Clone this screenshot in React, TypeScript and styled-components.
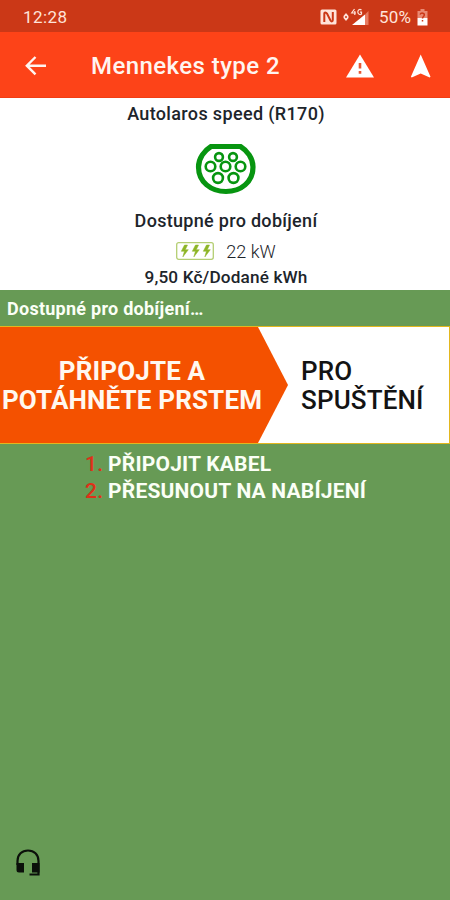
import React from "react";
import styled, { createGlobalStyle } from "styled-components";

const GlobalStyle = createGlobalStyle`
  * { box-sizing: border-box; }
  body { margin: 0; background: #679a55; }
`;

const Screen = styled.div`
  display: flex;
  flex-direction: column;
  width: 450px;
  height: 900px;
  overflow: hidden;
  background: #679a55;
  font-family: Roboto, sans-serif;
`;

const StatusBar = styled.header`
  display: flex;
  align-items: center;
  height: 32px;
  padding: 2px 22px 0 23px;
  background: #cb3817;
  color: #ffe3da;
  font-size: 17px;
  line-height: 20px;
`;

const Clock = styled.span`
  flex: 1;
  letter-spacing: 0.4px;
`;

const StatusIcon = styled.svg<{ $gap: number }>`
  flex: none;
  display: block;
  margin-right: ${(p) => p.$gap}px;
`;

const BatteryLevel = styled.span`
  width: 38px;
  white-space: nowrap;
  font-size: 17px;
  letter-spacing: 0.2px;
`;

const AppBar = styled.nav`
  display: flex;
  align-items: center;
  height: 66px;
  padding: 2px 17px 0 21px;
  background: #fd4318;
  border-bottom: 1px solid #f13d14;
  color: #fff5f0;
`;

const IconButton = styled.button`
  display: flex;
  padding: 0;
  border: 0;
  background: none;
  color: inherit;
`;

const Title = styled.h1`
  flex: 1;
  margin: 0 0 0 40px;
  font-size: 24px;
  font-weight: 500;
  line-height: 28px;
  letter-spacing: 0.43px;
  white-space: nowrap;
`;

const Actions = styled.div`
  display: flex;
  gap: 35px;
`;

const Station = styled.section`
  display: flex;
  flex-direction: column;
  align-items: center;
  height: 192px;
  padding: 5px 0 0 2px;
  background: #fff;
  color: #1d252b;
`;

const StationLine = styled.div<{ $spacing: number; $size?: number }>`
  font-size: ${(p) => p.$size ?? 18}px;
  font-weight: 500;
  line-height: 22px;
  letter-spacing: ${(p) => p.$spacing}px;
  white-space: nowrap;
`;

const PlugIcon = styled.svg`
  display: block;
  margin: 18px 0 15px;
`;

const PowerRow = styled.div`
  display: flex;
  align-items: center;
  gap: 12px;
  height: 22px;
  margin: 8px 0 4px;
  font-size: 18px;
  font-weight: 300;
`;

const Notice = styled.div`
  height: 36px;
  padding: 0 7px;
  background: #679a55;
  color: #fbfff6;
  font-size: 18px;
  font-weight: 700;
  line-height: 37px;
  letter-spacing: 0.26px;
`;

const SwipeTrack = styled.section`
  display: flex;
  height: 118px;
  border: solid #e3b71e;
  border-width: 1px 1px 1px 0;
  background: #fff;
`;

const SwipeHandle = styled.div`
  display: flex;
  align-items: center;
  flex: none;
  width: 288px;
  padding: 2px 0 0 1px;
  background: #f45100;
  clip-path: polygon(0 0, 258px 0, 100% 50%, 258px 100%, 0 100%);
  color: #fff8f0;
`;

const SwipeText = styled.div<{ $align: string; $weight: number }>`
  width: 262px;
  font-size: 26px;
  font-weight: ${(p) => p.$weight};
  line-height: 29px;
  letter-spacing: 0.15px;
  text-align: ${(p) => p.$align};
  white-space: nowrap;
`;

const SwipeHint = styled.div`
  display: flex;
  align-items: center;
  padding: 2px 0 0 13px;
  color: #131313;
`;

const Steps = styled.ol`
  flex: 1;
  margin: 0;
  padding: 7px 0 0 85px;
  list-style: none;
  color: #fbfff6;
  font-size: 21px;
  font-weight: 700;
  line-height: 27px;
  letter-spacing: 0.2px;
`;

const Step = styled.li`
  display: flex;
  white-space: nowrap;
`;

const StepNumber = styled.span`
  width: 23px;
  color: #de3018;
  font-weight: 500;
`;

const Footer = styled.footer`
  display: flex;
  padding: 0 0 23px 15px;
`;

const PINS = [
  { x: 24, y: 14, r: 3.9 },
  { x: 38, y: 14, r: 3.9 },
  { x: 15.5, y: 23.5, r: 4.8 },
  { x: 30.5, y: 23.5, r: 4.8 },
  { x: 45.5, y: 23.5, r: 4.8 },
  { x: 23, y: 35, r: 4.9 },
  { x: 38.5, y: 35, r: 4.9 },
];

const STEPS = ["PŘIPOJIT KABEL", "PŘESUNOUT NA NABÍJENÍ"];

export default function App() {
  return (
    <Screen>
      <GlobalStyle />
      <StatusBar>
        <Clock>12:28</Clock>
        <StatusIcon $gap={6} width="17" height="16" viewBox="0 0 17 16">
          <rect x="0.5" y="0.5" width="16" height="15" rx="1.5" fill="#ffe3da" />
          <path d="M4.3 13V4.5C4.3 3 6 3 7 4.5L10.5 11.5C11.5 13 12.8 12.5 12.8 11V3" fill="none" stroke="#cb3817" strokeWidth="2" />
        </StatusIcon>
        <StatusIcon $gap={10} width="26" height="18" viewBox="0 0 26 18">
          <path d="M0.5 8L3 5L5.5 8V10L3 13L0.5 10Z" fill="#ffe3da" />
          <path d="M2 9H4" stroke="#cb3817" strokeWidth="1.5" />
          <path d="M25.5 3V17H22V6.5Z" fill="#e87b61" />
          <path d="M22 6.5V17H9Z" fill="#fff" />
          <path d="M11.5 1L8.7 5H13M11.8 3V7M18.5 2C16.5 0.5 14.8 2 14.8 4S17 7.3 18.5 6V4.2H17" fill="none" stroke="#ffe3da" strokeWidth="1.2" />
        </StatusIcon>
        <BatteryLevel>50%</BatteryLevel>
        <StatusIcon $gap={0} width="11" height="17" viewBox="0 0 11 17">
          <path d="M3.5 0H7.5V2H10.5V9H0.5V2H3.5Z" fill="#e98a73" />
          <path d="M0.5 9H10.5V16.5H0.5Z" fill="#fff" />
          <path d="M3 5.5C4 3.5 7.5 3.7 7.3 6C7.2 7.5 5.5 7.5 5.5 9.5M5.5 11V12.5" fill="none" stroke="#cb3817" strokeWidth="1.5" />
        </StatusIcon>
      </StatusBar>
      <AppBar>
        <IconButton aria-label="Zpět">
          <svg width="30" height="30" viewBox="0 0 30 30">
            <path d="M25 14.7H6.5M14.5 6L5.8 14.7L14.5 23.4" fill="none" stroke="currentColor" strokeWidth="2.4" />
          </svg>
        </IconButton>
        <Title>Mennekes type 2</Title>
        <Actions>
          <IconButton aria-label="Upozornění">
            <svg width="28" height="24" viewBox="0 0 28 24">
              <path d="M14 0.5L28 23.5H0Z" fill="#fff" />
              <path d="M14 9V14.5M14 17V19.7" stroke="#e95834" strokeWidth="2.6" />
            </svg>
          </IconButton>
          <IconButton aria-label="Navigovat">
            <svg width="24" height="24" viewBox="0 0 24 24">
              <path d="M11.7 0.5L21.5 22.8L20.7 23.5L11.7 19.5L2.7 23.5L1.9 22.8Z" fill="#fff" />
            </svg>
          </IconButton>
        </Actions>
      </AppBar>
      <Station>
        <StationLine $spacing={0.35}>Autolaros speed (R170)</StationLine>
        <PlugIcon width="62" height="52" viewBox="0 0 62 52">
          <path d="M16 3.5H45.5C52 7.5 58 15 58 24C58 39 46 48.5 31 48.5S3.5 39 3.5 24C3.5 15 9.5 7.5 16 3.5Z" fill="#fff" stroke="#079510" strokeWidth="5.2" />
          {PINS.map((p) => (
            <circle key={`${p.x}-${p.y}`} cx={p.x} cy={p.y} r={p.r} fill="none" stroke="#079510" strokeWidth="2.6" />
          ))}
        </PlugIcon>
        <StationLine $spacing={0.3}>Dostupné pro dobíjení</StationLine>
        <PowerRow>
          <svg width="38" height="18" viewBox="0 0 38 18">
            <rect x="0.7" y="0.7" width="36.6" height="16.6" rx="2" fill="#fff" stroke="#b4ce72" strokeWidth="1.3" />
            {[5, 16, 27].map((x) => (
              <path key={x} transform={`translate(${x} 3)`} d="M3.5 0L0.3 6.3H3.4L1.8 12L7.3 4.7H4.3L6.5 0Z" fill="#8db526" stroke="#8db526" strokeWidth="0.5" />
            ))}
          </svg>
          <span>22 kW</span>
        </PowerRow>
        <StationLine $spacing={0.15} $size={17.2}>9,50 Kč/Dodané kWh</StationLine>
      </Station>
      <Notice>Dostupné pro dobíjení…</Notice>
      <SwipeTrack>
        <SwipeHandle>
          <SwipeText $align="center" $weight={700}>
            PŘIPOJTE A
            <br />
            POTÁHNĚTE PRSTEM
          </SwipeText>
        </SwipeHandle>
        <SwipeHint>
          <SwipeText $align="left" $weight={500}>
            PRO
            <br />
            SPUŠTĚNÍ
          </SwipeText>
        </SwipeHint>
      </SwipeTrack>
      <Steps>
        {STEPS.map((step, i) => (
          <Step key={step}>
            <StepNumber>{i + 1}.</StepNumber>
            {step}
          </Step>
        ))}
      </Steps>
      <Footer>
        <IconButton aria-label="Podpora">
          <svg width="26" height="28" viewBox="0 0 26 28">
            <path d="M2.5 16V12C2.5 5.5 7 1.5 13 1.5S23.5 5.5 23.5 12V25.5H14.5" fill="none" stroke="#0b100a" strokeWidth="2.2" />
            <path d="M1.5 14H9V23.5H4Q1.5 23.5 1.5 21ZM17 14H24.5V23.5H17Z" fill="#0b100a" />
          </svg>
        </IconButton>
      </Footer>
    </Screen>
  );
}
